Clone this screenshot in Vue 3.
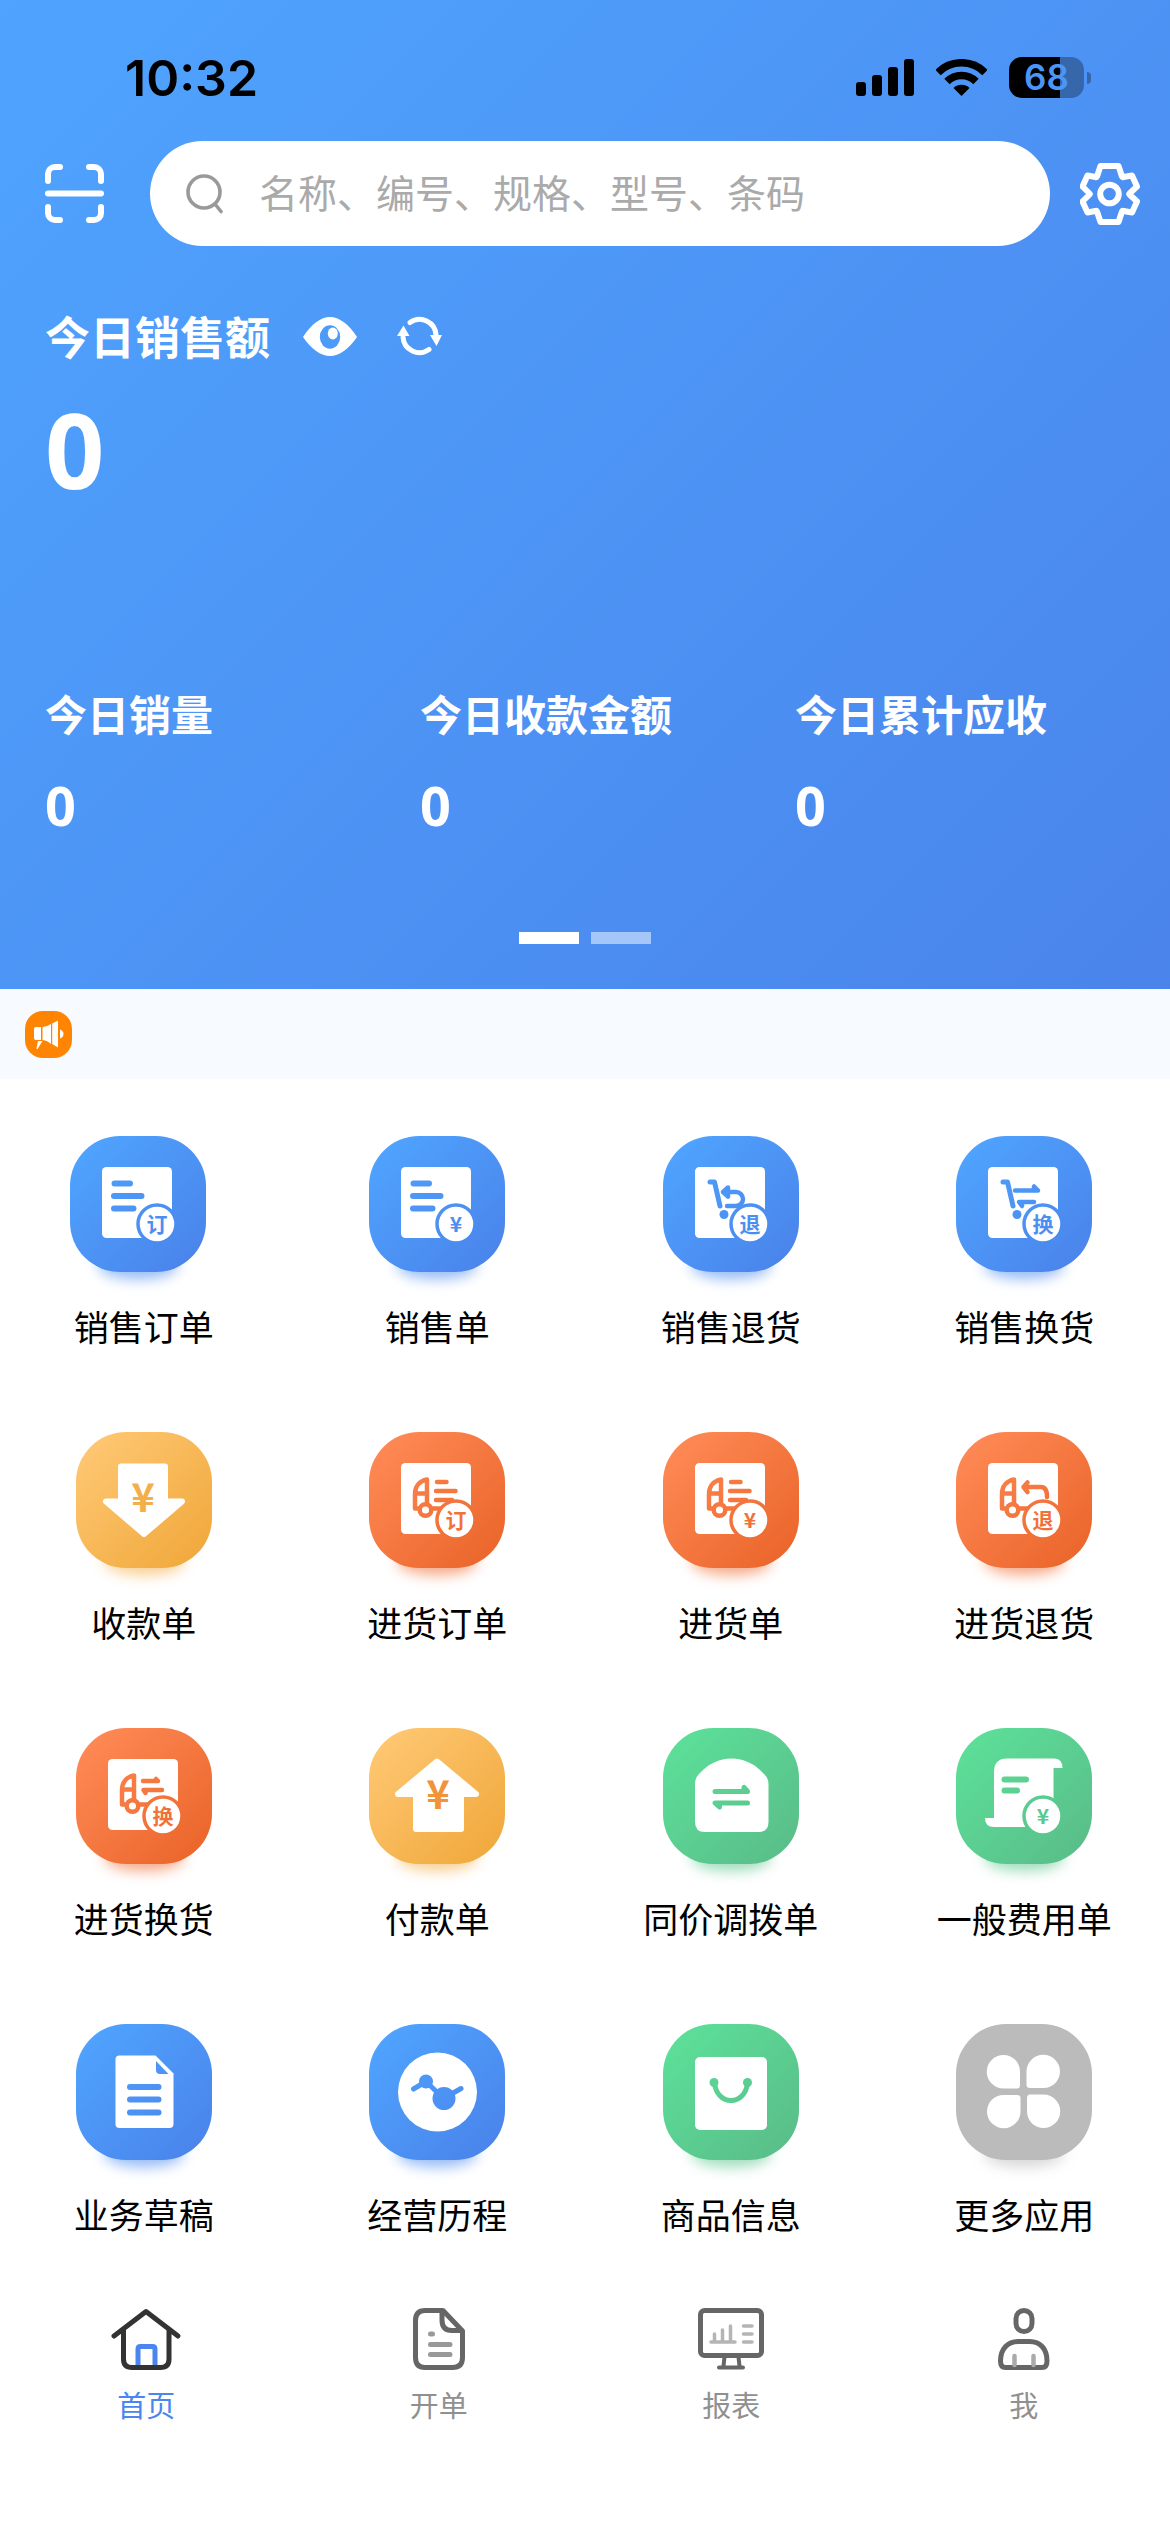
<script setup>
import { ref } from 'vue';

const keyword = ref('');
const showAmount = ref(true);
const slide = ref(0);
const activeTab = ref('home');

const battery = 68;

const stats = [
  { label: '今日销量', value: 0 },
  { label: '今日收款金额', value: 0 },
  { label: '今日累计应收', value: 0 }
];

// left is where the drawing starts inside its tile box
const apps = [
  { label: '销售订单', color: 'blue', icon: 'order', badge: '订', left: 6 },
  { label: '销售单', color: 'blue', icon: 'order', badge: '¥', left: 0 },
  { label: '销售退货', color: 'blue', icon: 'cart-return', badge: '退', left: 0 },
  { label: '销售换货', color: 'blue', icon: 'cart-swap', badge: '换', left: 0 },
  { label: '收款单', color: 'yellow', icon: 'receive', left: 0 },
  { label: '进货订单', color: 'orange', icon: 'truck', badge: '订', left: 0 },
  { label: '进货单', color: 'orange', icon: 'truck', badge: '¥', left: 0 },
  { label: '进货退货', color: 'orange', icon: 'truck-return', badge: '退', left: 0 },
  { label: '进货换货', color: 'orange', icon: 'truck-swap', badge: '换', left: 0 },
  { label: '付款单', color: 'yellow', icon: 'pay', left: 0 },
  { label: '同价调拨单', color: 'green', icon: 'transfer', left: 0 },
  { label: '一般费用单', color: 'green', icon: 'expense', badge: '¥', left: 0 },
  { label: '业务草稿', color: 'blue', icon: 'draft', left: 0 },
  { label: '经营历程', color: 'blue', icon: 'history', left: 0 },
  { label: '商品信息', color: 'green', icon: 'goods', left: 0 },
  { label: '更多应用', color: 'gray', icon: 'more', left: 0 }
];

const gradients = [
  { name: 'blue', from: '#4fa4ff', to: '#4a83ea' },
  { name: 'orange', from: '#ff8a56', to: '#ea652a' },
  { name: 'yellow', from: '#ffc874', to: '#f0a83b' },
  { name: 'green', from: '#5ce099', to: '#5abd89' },
  { name: 'gray', from: '#bbbbbb', to: '#bbbbbb' }
];

const tabs = [
  { id: 'home', label: '首页' },
  { id: 'bill', label: '开单' },
  { id: 'report', label: '报表' },
  { id: 'me', label: '我' }
];

const isSheet = (icon) => /^(order|cart|truck)/.test(icon);
const paint = (app) => `url(#fill-${app.color})`;
</script>

<template>
  <div class="page">
    <svg class="defs" width="0" height="0" aria-hidden="true">
      <defs>
        <linearGradient
          v-for="g in gradients"
          :id="'fill-' + g.name"
          :key="g.name"
          gradientUnits="userSpaceOnUse"
          x1="8" y1="8" x2="128" y2="128"
        >
          <stop offset="0" :stop-color="g.from" />
          <stop offset="1" :stop-color="g.to" />
        </linearGradient>
        <filter id="soft" x="-50%" y="-100%" width="200%" height="300%">
          <feGaussianBlur stdDeviation="7" />
        </filter>
      </defs>
    </svg>

    <header class="hero">
      <div class="status-bar">
        <span class="time">10:32</span>
        <div class="status-icons">
          <svg width="58" height="37" viewBox="0 0 58 37">
            <rect x="0" y="23" width="10" height="14" rx="3" />
            <rect x="16" y="16" width="10" height="21" rx="3" />
            <rect x="32" y="8" width="10" height="29" rx="3" />
            <rect x="48" y="0" width="10" height="37" rx="3" />
          </svg>
          <svg width="51" height="37" viewBox="0 0 51 37">
            <g fill="none" stroke="#000" stroke-width="7.6">
              <path d="M2 13.5a33.2 33.2 0 0 1 47 0" />
              <path d="M11 22.5a20.5 20.5 0 0 1 29 0" />
            </g>
            <path d="M17.5 29a11.3 11.3 0 0 1 16 0L25.5 37z" />
          </svg>
          <div class="battery">
            <div class="battery-body">{{ battery }}</div>
            <div class="battery-cap"></div>
          </div>
        </div>
      </div>

      <div class="search-row">
        <button class="icon-button" aria-label="扫一扫">
          <svg width="59" height="59" viewBox="0 0 59 59" fill="none" stroke="#fff" stroke-width="6" stroke-linecap="round">
            <path d="M3 17V10a7 7 0 0 1 7-7h5M44 3h5a7 7 0 0 1 7 7v7M3 43v6a7 7 0 0 0 7 7h5M44 56h5a7 7 0 0 0 7-7v-6M3 29.500h53" />
          </svg>
        </button>
        <label class="search-box">
          <svg width="38" height="40" viewBox="0 0 38 40" fill="none" stroke="#999" stroke-width="3.600" stroke-linecap="round">
            <circle cx="18" cy="18" r="16" />
            <path d="M29 30l6 7.500" />
          </svg>
          <input v-model="keyword" type="text" aria-label="搜索" placeholder="名称、编号、规格、型号、条码" />
        </label>
        <button class="icon-button" aria-label="设置">
          <svg width="60" height="62" viewBox="0 0 60 62" fill="none" stroke="#fff" stroke-linejoin="round">
            <path stroke-width="6" d="M20.500 3h18l3.500 10.500q.5 1 1.500.5l8.500-1.500 5 11-7.500 7q-.5.500 0 1l7.500 7-5 11-8.500-1.500q-1-.5-1.500.5L38.500 59h-18L17 48.500q-.5-1-1.500-.5L7.500 49.500l-5-11 7-7q.5-.5 0-1l-7-7 5-11 8 1.500q1 .5 1.500-.5z" />
            <circle cx="29.500" cy="31" r="9.300" stroke-width="6" />
          </svg>
        </button>
      </div>

      <div class="sales-title">
        <span>今日销售额</span>
        <button class="icon-button eye" aria-label="显示金额" @click="showAmount = !showAmount">
          <svg width="54" height="39" viewBox="0 0 54 39">
            <path fill="#fff" d="M0 20C8 7 18 0 27 0s19 7 27 20c-8 12-18 19-27 19S8 32 0 20z" />
            <ellipse cx="27" cy="20" rx="10.200" ry="11.700" fill="#4c9bf9" />
            <ellipse cx="29.800" cy="16.500" rx="5" ry="6" fill="#fff" />
          </svg>
        </button>
        <button class="icon-button refresh" aria-label="刷新">
          <svg width="46" height="40" viewBox="0 0 46 40">
            <g fill="none" stroke="#fff" stroke-width="5" stroke-linecap="round">
              <path d="M13 6.500A16.500 16.500 0 0 1 39 19" />
              <path d="M32 33.500A16.500 16.500 0 0 1 6 21" />
            </g>
            <path fill="#fff" d="M33 19h12l-5.500 11zM0 20h12.500L6.500 9.500z" />
          </svg>
        </button>
      </div>
      <div class="sales-amount">{{ showAmount ? 0 : '****' }}</div>

      <div class="stats">
        <div v-for="stat in stats" :key="stat.label" class="stat">
          <div class="stat-label">{{ stat.label }}</div>
          <div class="stat-value">{{ showAmount ? stat.value : '****' }}</div>
        </div>
      </div>

      <div class="dots">
        <button
          v-for="n in 2"
          :key="n"
          :class="['dot', { active: slide === n - 1 }]"
          :aria-label="'第' + n + '页'"
          @click="slide = n - 1"
        ></button>
      </div>
    </header>

    <div class="notice">
      <svg width="47" height="47" viewBox="0 0 47 47">
        <rect width="47" height="47" rx="18" fill="#ff8402" />
        <g fill="#fff">
          <path d="M11 16h5v13h-5q-2 0-2-2v-9q0-2 2-2z" />
          <path d="M17.500 16q5-.5 8.500-3v20q-3.500-3.500-8.500-4z" />
          <path d="M27.200 12.500L33 9.500v27l-5.800-3.500z" />
          <path d="M35 18.500q3.500 1.500 3.500 4.500T35 27.500z" />
          <path d="M13 30h4.500L12.500 38q-1 .5-1-1z" />
        </g>
      </svg>
    </div>

    <main class="apps">
      <button v-for="app in apps" :key="app.label" class="app">
        <svg class="tile" width="136" height="136" :viewBox="app.left + ' 0 136 136'">
          <ellipse cx="68" cy="129" rx="40" ry="14" :fill="paint(app)" filter="url(#soft)" opacity=".6" />
          <rect width="136" height="136" rx="50" :fill="paint(app)" />

          <rect v-if="isSheet(app.icon)" x="32" y="31" width="70" height="71" rx="4.500" fill="#fff" />

          <g fill="none" stroke-linecap="round" stroke-linejoin="round" :stroke="paint(app)">
            <path v-if="app.icon === 'order'" stroke-width="6" d="M44.500 47.500H60M44 60h27.500M44 72.500h19.500" />

            <template v-if="app.icon.startsWith('cart')">
              <path stroke-width="5" d="M47 46h4.500l5.500 24" />
              <circle cx="61" cy="78.500" r="4.500" stroke="none" :fill="paint(app)" />
            </template>
            <path v-if="app.icon === 'cart-return'" stroke-width="4.500" d="M65 51.500l-5 4.500 5 4.500zM61 56h12a7 7 0 0 1 0 14h-9" />
            <path v-if="app.icon === 'cart-swap'" stroke-width="4.500" d="M59 54.500h23l-4-4v4M78 66H63l3 4v-4" />

            <template v-if="app.icon.startsWith('truck')">
              <path stroke-width="4.500" d="M58 47.500C50 49 46 55 46 62v14.500h3M46 61.500h12M58 47.500V72M64 76.500h8" />
              <circle cx="56.500" cy="78" r="5.800" stroke-width="4.500" />
            </template>
            <path v-if="app.icon === 'truck'" stroke-width="4.500" d="M68 50h9.500M67 59h19.500M67 68h16" />
            <path v-if="app.icon === 'truck-return'" stroke-width="4.500" d="M71.500 50.500L67.500 55l4 5M68.500 55H85q6 0 6 10" />
            <path v-if="app.icon === 'truck-swap'" stroke-width="4.500" d="M67 53h15l-2-2v2M86 62H67.500l2 3v-3" />
          </g>

          <g v-if="app.icon === 'receive'">
            <path fill="#fff" stroke="#fff" stroke-width="6" stroke-linejoin="round" d="M45 34.500h44v35h17L68 102 30 69.500h15z" />
            <text class="yen" x="67" y="80" text-anchor="middle" fill="#f3b04a">¥</text>
          </g>
          <g v-if="app.icon === 'pay'">
            <path fill="#fff" stroke="#fff" stroke-width="6" stroke-linejoin="round" d="M68 33.500L107 66H92v35H47V66H29z" />
            <text class="yen" x="69" y="81" text-anchor="middle" fill="#f29337">¥</text>
          </g>
          <g v-if="app.icon === 'transfer'">
            <path fill="#fff" d="M32 56q0-6 4-10 14-15.500 32.500-15.500T101 46q4.500 4 4.500 10v38q0 10-10 10H42q-10 0-10-10z" />
            <path fill="none" stroke-width="5" stroke-linecap="round" stroke-linejoin="round" :stroke="paint(app)" d="M52 63.500h32.500l-3.500-4v4M84.500 75H52l4.500 4V75" />
          </g>
          <g v-if="app.icon === 'expense'">
            <path fill="#fff" d="M38 44q0-13.500 13-13.500h47q8.500 0 8.500 9.500h-9v59H38q-9 0-9-9h9z" />
            <path fill="none" stroke-width="6" stroke-linecap="round" :stroke="paint(app)" d="M48.500 51.500H70M48.500 62.500H61" />
            <path :fill="paint(app)" d="M84 88h22v20H84z" />
          </g>
          <g v-if="app.icon === 'draft'">
            <path fill="#fff" d="M43.500 31.500h36l18 18V100q0 4-4 4h-50q-4 0-4-4V35.500q0-4 4-4z" />
            <path :fill="paint(app)" d="M80 37l12.500 13H84q-4 0-4-4z" />
            <path fill="none" stroke-width="6" stroke-linecap="round" :stroke="paint(app)" d="M54 63h28.500M54 75.500h28.500M54 88.500h28.500" />
          </g>
          <g v-if="app.icon === 'history'">
            <circle cx="68.500" cy="68" r="39.500" fill="#fff" />
            <path fill="none" stroke-width="5" stroke-linecap="round" stroke-linejoin="round" :stroke="paint(app)" d="M44.500 65L57 57.500l17.500 17L92 64.500" />
            <circle cx="57" cy="57.500" r="7" :fill="paint(app)" />
            <circle cx="75" cy="74.500" r="11.500" :fill="paint(app)" />
          </g>
          <g v-if="app.icon === 'goods'">
            <rect x="32" y="33" width="72" height="73" rx="5" fill="#fff" />
            <path fill="none" stroke-width="5" :stroke="paint(app)" d="M51.500 59c1 10 7.500 17.500 16.500 17.500S83.500 69 84.500 59" />
            <circle cx="51" cy="58.500" r="4.500" :fill="paint(app)" />
            <circle cx="84.500" cy="58.500" r="4.500" :fill="paint(app)" />
          </g>
          <g v-if="app.icon === 'more'" fill="#fff">
            <path
              v-for="turn in [0, 90, 180, 270]"
              :key="turn"
              :transform="`rotate(${turn} 67.500 67.500)`"
              d="M47.500 31a16.500 16.500 0 0 1 16.500 16.500V61q0 3.500-3 3.500H47.500a16.500 16.500 0 0 1 0-33.500z"
            />
          </g>

          <g v-if="app.badge">
            <circle cx="87" cy="88" r="19" fill="#fff" stroke-width="3.500" :stroke="paint(app)" />
            <text class="badge" x="87" y="96" text-anchor="middle" :fill="paint(app)">{{ app.badge }}</text>
          </g>
        </svg>
        <span class="app-label">{{ app.label }}</span>
      </button>
    </main>

    <nav class="tab-bar">
      <a
        v-for="tab in tabs"
        :key="tab.id"
        href="#"
        :class="['tab', { active: activeTab === tab.id }]"
        @click.prevent="activeTab = tab.id"
      >
        <svg width="72" height="62" viewBox="0 0 72 62" fill="none" stroke="#666" stroke-width="5" stroke-linecap="round" stroke-linejoin="round">
          <g v-if="tab.id === 'home'">
            <path stroke="#333" d="M4 28L36 3.500 68 28M13.500 22v29q0 8.500 8.500 8.500h28.500q8.500 0 8.500-8.500V22" />
            <path stroke="#4a86ee" stroke-linecap="butt" d="M28 57V41q0-2.500 2.500-2.500h12q2.500 0 2.500 2.500v16" />
          </g>
          <g v-if="tab.id === 'bill'">
            <path d="M22 2.500h18L59.500 23v26.500q0 10-10 10H22q-9.500 0-9.500-10v-37q0-10 9.500-10z" />
            <path d="M39 4v8q0 10.500 10 10.500h9.500" />
            <path stroke="#999" d="M27.500 26h2M27.500 36.500H47M27.500 46.500H47" />
          </g>
          <g v-if="tab.id === 'report'">
            <rect x="5.500" y="2.500" width="61" height="45" rx="4" />
            <path stroke-width="4" d="M29.500 49l-1 9M43.500 49l1 9M24 59.500h24" />
            <path stroke="#b5b5b5" stroke-width="3.500" d="M16 34h24M19.500 26v8M27.500 22v12M35.500 18v16M48.500 18H57M48.500 26H57M48.500 34H57" />
          </g>
          <g v-if="tab.id === 'me'">
            <rect x="28" y="2.500" width="16" height="21" rx="8" />
            <path d="M12.500 53c0-12 7-19.500 18-19.500h11c11 0 17.500 7.500 17.500 19.500q0 6.500-5 6.500H17.500q-5 0-5-6.500z" />
            <path stroke="#aaa" d="M26.500 48v9M45.500 48v9" stroke-width="4.500" />
          </g>
        </svg>
        <span class="tab-label">{{ tab.label }}</span>
      </a>
    </nav>
  </div>
</template>

<style>
body {
  background: #fff;
}
</style>

<style scoped>
.page {
  font-family: "Noto Sans CJK SC", sans-serif;
  color: #000;
  background: #fff;
}

.defs {
  position: absolute;
}

button {
  padding: 0;
  border: none;
  background: none;
  font: inherit;
  color: inherit;
  cursor: pointer;
}

svg {
  display: block;
  flex: none;
}

.icon-button {
  flex: none;
}

.hero {
  padding: 57px 0 45px;
  color: #fff;
  background: linear-gradient(135deg, #4fa4ff, #4a84eb);
}

.status-bar {
  display: flex;
  align-items: center;
  justify-content: space-between;
  height: 41px;
  padding: 0 79px 0 125px;
  color: #000;
}

.time {
  font-family: Inter, sans-serif;
  font-size: 50px;
  font-weight: 600;
  line-height: 60px;
}

.status-icons {
  display: flex;
  align-items: center;
  gap: 22px;
}

.battery {
  display: flex;
  align-items: center;
  gap: 3px;
}

.battery-body {
  width: 75px;
  height: 41px;
  border-radius: 13px;
  font-family: Inter, sans-serif;
  font-size: 35px;
  font-weight: 600;
  line-height: 41px;
  text-align: center;
  color: #4b95f6;
  background: linear-gradient(to right, #000 68%, rgba(0, 0, 0, 0.3) 68%);
}

.battery-cap {
  width: 4px;
  height: 12px;
  border-radius: 0 4px 4px 0;
  background: rgba(0, 0, 0, 0.3);
}

.search-row {
  display: flex;
  align-items: center;
  margin-top: 43px;
  padding: 0 30px 0 45px;
}

.search-box {
  flex: 1;
  display: flex;
  align-items: center;
  gap: 35px;
  height: 105px;
  margin: 0 30px 0 46px;
  padding: 0 36px;
  border-radius: 60px;
  box-sizing: border-box;
  background: #fff;
}

.search-box input {
  flex: 1;
  min-width: 0;
  padding: 0 0 5px;
  border: none;
  outline: none;
  font-family: inherit;
  font-size: 39px;
  line-height: 60px;
  color: #333;
  background: transparent;
}

.search-box input::placeholder {
  color: #aaa;
}

.sales-title {
  display: flex;
  align-items: center;
  margin-top: 60px;
  padding: 0 45px;
  font-size: 45px;
  font-weight: 700;
  line-height: 60px;
}

.eye {
  margin-left: 33px;
}

.refresh {
  margin-left: 40px;
}

.sales-amount {
  margin-top: 33px;
  padding: 0 45px;
  font-family: "Noto Sans", sans-serif;
  font-size: 104px;
  font-weight: 700;
  line-height: 100px;
}

.stats {
  display: grid;
  grid-template-columns: repeat(3, 1fr);
  margin-top: 184px;
  padding: 0 0 0 45px;
}

.stat-label {
  font-size: 42px;
  font-weight: 700;
  line-height: 60px;
}

.stat-value {
  margin-top: 32px;
  font-family: "Noto Sans", sans-serif;
  font-size: 54px;
  font-weight: 700;
  line-height: 60px;
}

.dots {
  display: flex;
  justify-content: center;
  gap: 12px;
  margin-top: 97px;
}

.dot {
  width: 60px;
  height: 12px;
  background: rgba(255, 255, 255, 0.5);
}

.dot.active {
  background: #fff;
}

.notice {
  display: flex;
  align-items: center;
  height: 90px;
  padding: 0 25px;
  background: #f7faff;
}

.apps {
  display: grid;
  grid-template-columns: repeat(4, 1fr);
  row-gap: 79px;
  margin: 0 -1px 0 -3px;
  padding-top: 57px;
}

.app {
  display: flex;
  flex-direction: column;
  align-items: center;
}

.tile {
  overflow: visible;
}

.badge {
  font-size: 21px;
  font-weight: 700;
}

.yen {
  font-size: 40px;
  font-weight: 700;
}

.app-label {
  margin-top: 27px;
  font-size: 35px;
  line-height: 54px;
  white-space: nowrap;
}

.tab-bar {
  display: grid;
  grid-template-columns: repeat(4, 1fr);
  padding: 67px 0 90px;
}

.tab {
  display: flex;
  flex-direction: column;
  align-items: center;
  color: #909090;
  text-decoration: none;
}

.tab-label {
  margin-top: 14px;
  font-size: 29px;
  line-height: 40px;
}

.tab.active {
  color: #4a86ee;
}
</style>
